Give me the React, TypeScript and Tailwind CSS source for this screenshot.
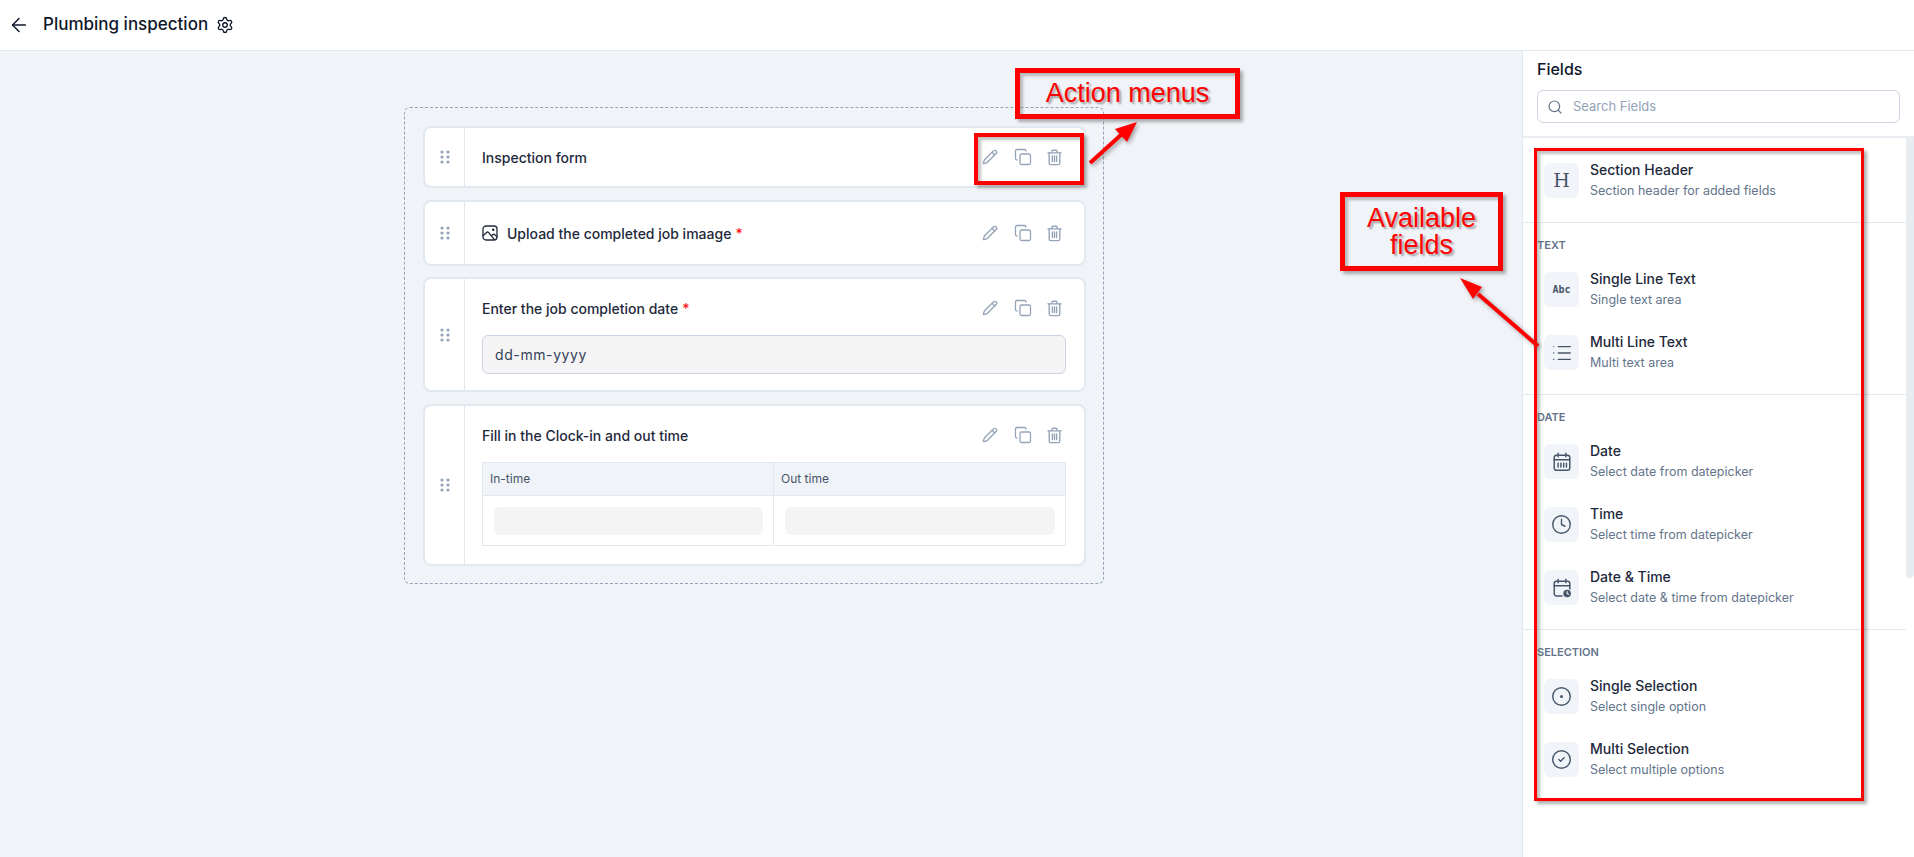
import type { ReactNode } from "react";
import { ArrowLeft, Settings, Pencil, Copy, Search, List, Clock, CircleDot, CircleCheck } from "lucide-react";

const Grip = () => (
  <svg width="10" height="14" viewBox="0 0 10 14" className="text-[#94a3b8]" fill="currentColor">
    <circle cx="2" cy="2" r="1.6" />
    <circle cx="8" cy="2" r="1.6" />
    <circle cx="2" cy="7" r="1.6" />
    <circle cx="8" cy="7" r="1.6" />
    <circle cx="2" cy="12" r="1.6" />
    <circle cx="8" cy="12" r="1.6" />
  </svg>
);

const TrashIcon = () => (
  <svg width="17" height="17" viewBox="0 0 16 16" fill="none" stroke="currentColor" strokeWidth="1.3" strokeLinecap="round" strokeLinejoin="round">
    <path d="M1.8 3.6h12.4" />
    <path d="M5.6 3.4V2.2c0-.6.4-1 1-1h2.8c.6 0 1 .4 1 1v1.2" />
    <path d="M3 3.8v9.4c0 .9.6 1.5 1.5 1.5h7c.9 0 1.5-.6 1.5-1.5V3.8" />
    <path d="M6 6.6v5.2M8 6.6v5.2M10 6.6v5.2" />
  </svg>
);

const PictureIcon = () => (
  <svg width="16" height="16" viewBox="0 0 16 16" fill="none" stroke="#1e293b" strokeWidth="1.3" strokeLinecap="round" strokeLinejoin="round">
    <rect x="1" y="1" width="14" height="14" rx="3" />
    <path d="M1.2 10.5 4.6 7.4c.6-.5 1.3-.5 1.9 0l5.8 7" />
    <path d="m9.4 10.8 1.4-1.2c.5-.4 1.2-.4 1.7 0l2.3 2" />
    <circle cx="11.2" cy="4.8" r=".6" fill="#1e293b" />
  </svg>
);

const CalendarBars = () => (
  <svg width="20" height="20" viewBox="0 0 18 18" fill="none" stroke="currentColor" strokeWidth="1.3" strokeLinecap="round" strokeLinejoin="round">
    <rect x="2" y="3" width="14" height="13.5" rx="2" />
    <path d="M5.5 1.2v3M12.5 1.2v3M2 7h14" />
    <path d="M5.5 10v3.6M8 10v3.6M10.5 10v3.6M13 10v3.6" />
  </svg>
);

const CalendarTime = () => (
  <svg width="20" height="20" viewBox="0 0 18 18" fill="none" stroke="currentColor" strokeWidth="1.3" strokeLinecap="round" strokeLinejoin="round">
    <path d="M9 16.2H4a2 2 0 0 1-2-2V5a2 2 0 0 1 2-2h10a2 2 0 0 1 2 2v5" />
    <path d="M5.5 1.2v3M12.5 1.2v3M2 7h14" />
    <circle cx="13.6" cy="14" r="3.4" fill="currentColor" stroke="none" />
    <path d="M13.6 12.2V14l1.2.7" stroke="#f1f5f9" strokeWidth="1" />
  </svg>
);

const Actions = () => (
  <div className="flex items-center gap-[14px] text-[#94a3b8]">
    <Pencil size={16} strokeWidth={2} className="mr-[2px]" />
    <Copy size={18} strokeWidth={1.7} />
    <TrashIcon />
  </div>
);

const Required = () => <span className="text-[#ff1a1a] ml-1">*</span>;

const FormCard = ({ height, children }: { height: string; children: ReactNode }) => (
  <div className={`flex ${height} bg-white rounded-lg border-2 border-[#e2e8f0]`}>
    <div className="w-[40px] shrink-0 flex items-center justify-center border-r border-[#e2e8f0]">
      <Grip />
    </div>
    {children}
  </div>
);

const FieldItem = ({ icon, title, sub }: { icon: ReactNode; title: string; sub: string }) => (
  <div className="flex gap-[11px] pl-[21px]">
    <div className="w-[35px] h-[35px] shrink-0 rounded-md bg-[#f1f5f9] flex items-center justify-center text-[#475569]">
      {icon}
    </div>
    <div className="-mt-[3px]">
      <div className="text-[14px] leading-[20px] font-[450] text-[#1e293b]">{title}</div>
      <div className="text-[12.5px] leading-[20px] text-[#64748b] mt-px">{sub}</div>
    </div>
  </div>
);

const GroupLabel = ({ children }: { children: ReactNode }) => (
  <div className="pl-[14px] text-[11px] leading-[16px] font-semibold text-[#64748b] mb-[19px]">{children}</div>
);

const boxShadow = "shadow-[3px_3px_3px_rgba(100,100,100,0.5),inset_3px_3px_3px_rgba(100,100,100,0.4)]";

export default function App() {
  return (
    <div className="relative h-[857px] w-[1914px] overflow-hidden bg-white flex flex-col font-['Inter',sans-serif]">
      <header className="h-[51px] shrink-0 border-b border-[#e2e8f0] flex items-center pl-[8px]">
        <ArrowLeft size={22} strokeWidth={1.6} className="text-[#0f172a]" />
        <h1 className="ml-[13px] text-[17px] font-[450] text-[#0f172a]">Plumbing inspection</h1>
        <Settings size={18} strokeWidth={1.8} className="ml-[8px] text-[#0f172a]" />
      </header>

      <div className="flex flex-1 min-h-0">
        <main className="flex-1 bg-[#f0f3f8] pl-[404px] pt-[56px]">
          <div className="w-[700px] h-[477px] border border-dashed border-[#94a3b8] rounded-md pt-[18px] px-[18px]">
            <div className="flex flex-col gap-[12px] w-[663px]">
              <FormCard height="h-[62px]">
                <div className="flex-1 flex items-center justify-between pl-[17px] pr-[21px]">
                  <span className="text-[14px] font-[450] text-[#1e293b]">Inspection form</span>
                  <Actions />
                </div>
              </FormCard>

              <FormCard height="h-[66px]">
                <div className="flex-1 flex items-center justify-between pl-[17px] pr-[21px]">
                  <span className="flex items-center text-[14px] font-[450] text-[#1e293b]">
                    <PictureIcon />
                    <span className="ml-[9px]">Upload the completed job imaage</span>
                    <Required />
                  </span>
                  <Actions />
                </div>
              </FormCard>

              <FormCard height="h-[115px] -mt-px">
                <div className="flex-1 pl-[17px] pr-[18px] pt-[19px]">
                  <div className="flex items-center justify-between pr-[3px] h-[20px]">
                    <span className="text-[14px] font-[450] text-[#1e293b]">
                      Enter the job completion date
                      <Required />
                    </span>
                    <Actions />
                  </div>
                  <div className="mt-[17px] h-[39px] rounded-md border border-[#cbd5e1] bg-[#f4f4f5] flex items-center pl-[12px] text-[14px] tracking-[0.6px] text-[#334155]">
                    dd-mm-yyyy
                  </div>
                </div>
              </FormCard>

              <FormCard height="h-[162px]">
                <div className="flex-1 pl-[17px] pr-[18px] pt-[19px]">
                  <div className="flex items-center justify-between pr-[3px] h-[20px]">
                    <span className="text-[14px] font-[450] text-[#1e293b]">Fill in the Clock-in and out time</span>
                    <Actions />
                  </div>
                  <div className="mt-[17px] border border-[#e2e8f0] grid grid-cols-2 text-[12px] text-[#475569]">
                    <div className="h-[33px] bg-[#f0f3f8] border-b border-r border-[#e2e8f0] flex items-center pl-[7px]">In-time</div>
                    <div className="h-[33px] bg-[#f0f3f8] border-b border-[#e2e8f0] flex items-center pl-[7px]">Out time</div>
                    <div className="h-[49px] border-r border-[#e2e8f0] pl-[11px] pr-[10px] pt-[11px]">
                      <div className="h-[28px] rounded-md bg-[#f4f4f5]" />
                    </div>
                    <div className="h-[49px] pl-[11px] pr-[10px] pt-[11px]">
                      <div className="h-[28px] rounded-md bg-[#f4f4f5]" />
                    </div>
                  </div>
                </div>
              </FormCard>
            </div>
          </div>
        </main>

        <aside className="w-[392px] shrink-0 border-l border-[#e2e8f0] flex flex-col">
          <div className="h-[87px] shrink-0 border-b-2 border-[#e9edf2] pl-[14px] pr-[14px] pt-[8px]">
            <div className="text-[16px] leading-[20px] font-[450] text-[#0f172a]">Fields</div>
            <div className="mt-[11px] h-[33px] rounded-md border border-[#cbd5e1] flex items-center pl-[9px] text-[13px] text-[#94a3b8]">
              <Search size={16} strokeWidth={1.8} className="text-[#64748b]" />
              <span className="ml-[10px]">Search Fields</span>
            </div>
          </div>

          <div className="flex-1 flex min-h-0">
            <div className="flex-1 min-w-0">
              <div className="h-[85px] pt-[25px] border-b border-[#e2e8f0]">
                <FieldItem
                  icon={<span className="font-['DejaVu_Serif',serif] text-[19px] leading-none">H</span>}
                  title="Section Header"
                  sub="Section header for added fields"
                />
              </div>

              <div className="h-[172px] pt-[14px] border-b border-[#e2e8f0]">
                <GroupLabel>TEXT</GroupLabel>
                <div className="flex flex-col gap-[25px]">
                  <FieldItem
                    icon={<span className="font-['DejaVu_Sans_Mono',monospace] font-bold text-[10px] leading-none">Abc</span>}
                    title="Single Line Text"
                    sub="Single text area"
                  />
                  <FieldItem icon={<List size={22} strokeWidth={1.5} />} title="Multi Line Text" sub="Multi text area" />
                </div>
              </div>

              <div className="h-[235px] pt-[14px] border-b border-[#e2e8f0]">
                <GroupLabel>DATE</GroupLabel>
                <div className="flex flex-col gap-[25px]">
                  <FieldItem icon={<CalendarBars />} title="Date" sub="Select date from datepicker" />
                  <FieldItem icon={<Clock size={21} strokeWidth={1.6} />} title="Time" sub="Select time from datepicker" />
                  <FieldItem icon={<CalendarTime />} title="Date & Time" sub="Select date & time from datepicker" />
                </div>
              </div>

              <div className="pt-[14px]">
                <GroupLabel>SELECTION</GroupLabel>
                <div className="flex flex-col gap-[25px]">
                  <FieldItem icon={<CircleDot size={21} strokeWidth={1.6} />} title="Single Selection" sub="Select single option" />
                  <FieldItem icon={<CircleCheck size={21} strokeWidth={1.6} />} title="Multi Selection" sub="Select multiple options" />
                </div>
              </div>
            </div>
            <div className="w-[8px] shrink-0 h-[440px] bg-[#e7ecf1] rounded-b-md" />
          </div>
        </aside>
      </div>

      {/* annotations sitting on top of the screenshot */}
      <div className={`absolute left-[1015px] top-[68px] w-[225px] h-[51px] border-[5px] border-[#ff0000] ${boxShadow} flex items-center justify-center font-['Liberation_Sans',sans-serif] text-[27px] text-[#ff0000] [text-shadow:2px_2px_2px_rgba(90,90,90,0.55)]`}>
        Action menus
      </div>
      <div className={`absolute left-[974px] top-[133px] w-[110px] h-[52px] border-[4px] border-[#ff0000] ${boxShadow}`} />
      <div className={`absolute left-[1340px] top-[192px] w-[163px] h-[79px] border-[5px] border-[#ff0000] ${boxShadow} flex items-center justify-center text-center font-['Liberation_Sans',sans-serif] text-[27px] leading-[27px] text-[#ff0000] [text-shadow:2px_2px_2px_rgba(90,90,90,0.55)]`}>
        Available
        <br />
        fields
      </div>
      <div className={`absolute left-[1534px] top-[148px] w-[330px] h-[653px] border-[3px] border-[#ff0000] ${boxShadow}`} />

      <svg className="absolute left-0 top-0 pointer-events-none drop-shadow-[2px_2px_2px_rgba(90,90,90,0.55)]" width="1914" height="857">
        <path d="M1090 163 1122 134" stroke="#ff0000" strokeWidth="4" fill="none" />
        <path d="M1137 122 1115 129 1127 142Z" fill="#ff0000" />
        <path d="M1538 346 1478 294" stroke="#ff0000" strokeWidth="4" fill="none" />
        <path d="M1460 278 1482 287 1473 299Z" fill="#ff0000" />
      </svg>
    </div>
  );
}
